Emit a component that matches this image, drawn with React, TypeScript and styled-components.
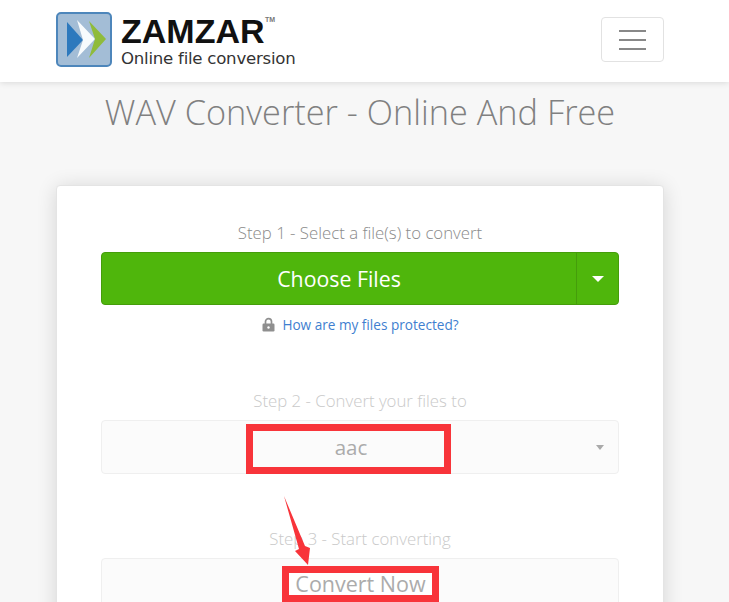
import * as React from 'react';
import styled, { createGlobalStyle } from 'styled-components';

const GlobalStyle = createGlobalStyle`
  html, body {
    margin: 0;
    padding: 0;
    height: 602px;
    overflow: hidden;
    background: #f7f7f7;
    font-family: "Open Sans", "Liberation Sans", sans-serif;
  }
`;

const Header = styled.header`
  display: flex;
  align-items: flex-start;
  justify-content: space-between;
  box-sizing: border-box;
  height: 82px;
  padding: 12px 65px 0 56px;
  background: #fff;
  box-shadow: 0 1px 6px rgba(0, 0, 0, 0.12);
`;

const Brand = styled.div`
  display: flex;
  align-items: flex-start;
  gap: 9px;
`;

const BrandText = styled.div`
  display: flex;
  flex-direction: column;
  gap: 3px;
  margin-top: 4px;
`;

const BrandName = styled.div`
  position: relative;
  font-family: "Liberation Sans", Arial, sans-serif;
  font-size: 34px;
  line-height: 30px;
  font-weight: 700;
  color: #111;
`;

const Tm = styled.span`
  position: absolute;
  top: 0;
  left: 144px;
  font-size: 7px;
  line-height: 8px;
  color: #777;
`;

const BrandTag = styled.div`
  font-family: "DejaVu Sans", sans-serif;
  font-size: 16.6px;
  line-height: 20px;
  letter-spacing: -0.25px;
  color: #333;
  white-space: nowrap;
`;

const Toggle = styled.button`
  display: flex;
  flex-direction: column;
  align-items: center;
  justify-content: center;
  gap: 7px;
  width: 63px;
  height: 45px;
  margin-top: 5px;
  padding: 0;
  background: #fff;
  border: 1px solid #e2e2e2;
  border-radius: 4px;
`;

const ToggleBar = styled.span`
  width: 27px;
  height: 2px;
  background: #888;
`;

const Title = styled.h1`
  margin: 0;
  padding: 9px 9px 0 0;
  height: 94px;
  box-sizing: border-box;
  text-align: center;
  font-size: 34.3px;
  line-height: 42px;
  font-weight: 300;
  color: #808080;
`;

const Card = styled.section`
  position: relative;
  box-sizing: border-box;
  width: 608px;
  height: 500px;
  margin: 9px 0 0 56px;
  padding: 36px 44px 0;
  background: #fff;
  border: 1px solid #e4e4e4;
  border-radius: 4px;
  box-shadow: 0 2px 20px rgba(0, 0, 0, 0.14);
`;

const StepLabel = styled.div<{ $faded?: boolean }>`
  height: 22px;
  margin-bottom: 8px;
  text-align: center;
  font-size: 16.8px;
  line-height: 22px;
  font-weight: 300;
  color: ${(p) => (p.$faded ? '#c9c9c9' : '#8a8a8a')};
`;

const SplitButton = styled.div`
  display: flex;
  height: 53px;
  background: #4fb60c;
  border: 1px solid #459d0b;
  border-radius: 4px;
  box-sizing: border-box;
  color: #fff;
`;

const ChooseFiles = styled.div`
  flex: 1;
  display: flex;
  align-items: center;
  justify-content: center;
  font-size: 21.3px;
`;

const Caret = styled.div`
  display: flex;
  align-items: center;
  justify-content: center;
  width: 41px;
  border-left: 1px solid #459d0b;

  &::after {
    content: "";
    border-top: 6px solid #fff;
    border-left: 6px solid transparent;
    border-right: 6px solid transparent;
  }
`;

const Protect = styled.div`
  display: flex;
  align-items: center;
  justify-content: center;
  gap: 6px;
  height: 38px;
  margin-bottom: 47px;
  font-size: 13.6px;
  color: #3f7fd0;
`;

const Field = styled.div<{ $mb?: number; $inset?: number }>`
  position: relative;
  display: flex;
  align-items: center;
  justify-content: center;
  box-sizing: border-box;
  height: 54px;
  margin-bottom: ${(p) => p.$mb ?? 0}px;
  padding-right: ${(p) => p.$inset ?? 0}px;
  background: #fbfbfb;
  border: 1px solid #efefef;
  border-radius: 4px;
  font-size: 20.5px;
  color: #ababab;
`;

const FieldCaret = styled.span`
  position: absolute;
  right: 14px;
  top: 24px;
  border-top: 5px solid #aaa;
  border-left: 4.5px solid transparent;
  border-right: 4.5px solid transparent;
`;

/* red markup drawn over the screenshot */
const FormatFrame = styled.div`
  position: absolute;
  left: 144px;
  top: 3px;
  box-sizing: border-box;
  width: 205px;
  height: 50px;
  border: 7px solid #f8343a;
`;

const ConvertFrame = styled.div`
  position: absolute;
  left: 180px;
  top: 7px;
  box-sizing: border-box;
  display: flex;
  align-items: center;
  justify-content: center;
  width: 157px;
  height: 36px;
  background: #fff;
  border: 7px solid #f8343a;
  font-size: 21.5px;
  line-height: 22px;
  white-space: nowrap;
  color: #ababab;
`;

const ArrowMark = styled.svg`
  position: absolute;
  left: 226px;
  top: 310px;
`;

const Lock = () => (
  <svg width="15" height="15" viewBox="0 0 15 15">
    <path d="M4.5 7V4.6a3 3 0 0 1 6 0V7" fill="none" stroke="#8f8f8f" strokeWidth="1.7" />
    <rect x="1.5" y="6.5" width="12" height="8" rx="1.2" fill="#8f8f8f" />
    <circle cx="7.5" cy="10.5" r="1.2" fill="#fff" />
  </svg>
);

const Logo = () => (
  <svg width="56" height="55" viewBox="0 0 56 55">
    <rect x="1" y="1" width="54" height="53" rx="4" fill="#a3bdd6" stroke="#4d86bb" strokeWidth="2" />
    <path d="M11 10 L27 28 L11 45 Z" fill="#2d79bd" />
    <path d="M21 8 L39 27 L21 46 L27 28 Z" fill="#f7fbfd" />
    <path d="M33 9 L50 27 L33 46 L39 27 Z" fill="#8fbb3b" />
  </svg>
);

const App: React.FunctionComponent = () => {
  return (
    <>
      <GlobalStyle />
      <Header>
        <Brand>
          <Logo />
          <BrandText>
            <BrandName>
              ZAMZAR<Tm>TM</Tm>
            </BrandName>
            <BrandTag>Online file conversion</BrandTag>
          </BrandText>
        </Brand>
        <Toggle aria-label="Menu">
          <ToggleBar />
          <ToggleBar />
          <ToggleBar />
        </Toggle>
      </Header>

      <Title>WAV Converter - Online And Free</Title>

      <Card>
        <StepLabel>Step 1 - Select a file(s) to convert</StepLabel>
        <SplitButton>
          <ChooseFiles>Choose Files</ChooseFiles>
          <Caret />
        </SplitButton>
        <Protect>
          <Lock />
          How are my files protected?
        </Protect>

        <StepLabel $faded>Step 2 - Convert your files to</StepLabel>
        <Field $mb={54} $inset={18}>
          aac
          <FieldCaret />
          <FormatFrame />
        </Field>

        <StepLabel $faded>Step 3 - Start converting</StepLabel>
        <Field>
          <ConvertFrame>Convert Now</ConvertFrame>
        </Field>

        <ArrowMark width="30" height="72" viewBox="0 0 30 72">
          <path d="M1 0 L22 50 L27 52 L25 69 L12 55 L16 53 Z" fill="#f8343a" />
        </ArrowMark>
      </Card>
    </>
  );
};

export default App;
